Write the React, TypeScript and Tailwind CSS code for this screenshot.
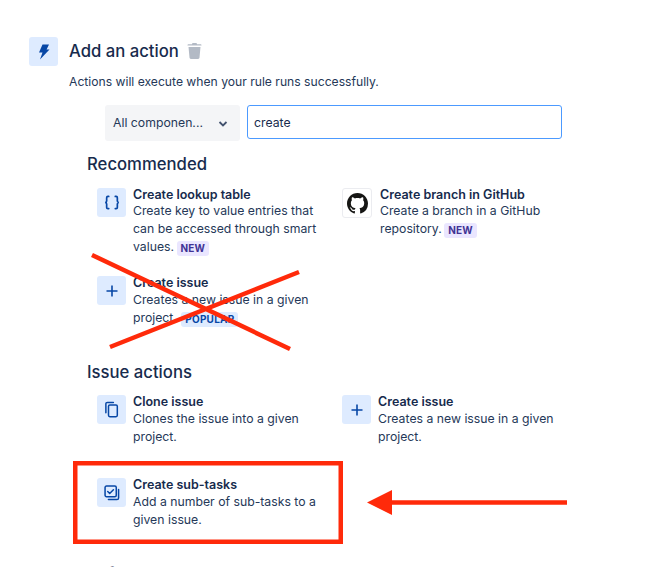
import React from "react";

const Badge = ({ kind, children }: { kind: "new" | "popular"; children: React.ReactNode }) => (
  <span
    className={
      "inline-block h-[15px] rounded-[3px] px-[4px] text-[10px] leading-[15px] font-bold tracking-[0.2px] align-[-1px] " +
      (kind === "new" ? "-ml-px bg-[#eae6ff] text-[#403294]" : "ml-px bg-[#deebff] text-[#0747a6]")
    }
  >
    {children}
  </span>
);

const IconBox = ({ children, plain }: { children: React.ReactNode; plain?: boolean }) => (
  <div
    className={
      "flex shrink-0 items-center justify-center rounded-[3px] " +
      (plain ? "h-[30px] w-[30px] border border-[#ebecf0] bg-white" : "h-[29px] w-[29px] bg-[#deebff]")
    }
  >
    {children}
  </div>
);

const Plus = () => (
  <svg width="14" height="14" viewBox="0 0 14 14" fill="none" stroke="#0747a6" strokeWidth="1.6">
    <path d="M7 1.5v11M1.5 7h11" />
  </svg>
);

const Braces = () => (
  <svg width="18" height="15" viewBox="0 0 18 16" fill="none" stroke="#0747a6" strokeWidth="1.8" strokeLinecap="round">
    <path d="M5.5 1.500H4.6C3.700 1.500 3.300 2 3.300 2.800v3.500c0 .9-.5 1.500-1.500 1.700 1 .2 1.500.8 1.500 1.700v3.500c0 .8.400 1.300 1.300 1.300h.9" />
    <path d="M12.500 1.500h.9c.9 0 1.300.5 1.300 1.300v3.500c0 .9.500 1.500 1.500 1.700-1 .2-1.500.8-1.500 1.700v3.500c0 .8-.4 1.300-1.300 1.300h-.9" />
  </svg>
);

const GitHub = () => (
  <svg width="21" height="21" viewBox="0 0 16 16" fill="#161614">
    <path d="M8 0C3.58 0 0 3.58 0 8c0 3.54 2.29 6.53 5.47 7.59.4.07.55-.17.55-.38 0-.19-.01-.82-.01-1.49-2.01.37-2.53-.49-2.69-.94-.09-.23-.48-.94-.82-1.13-.28-.15-.68-.52-.01-.53.63-.01 1.08.58 1.23.82.72 1.21 1.87.87 2.33.66.07-.52.28-.87.51-1.07-1.78-.2-3.64-.89-3.64-3.95 0-.87.31-1.59.82-2.15-.08-.2-.36-1.02.08-2.12 0 0 .67-.21 2.2.82.64-.18 1.32-.27 2-.27s1.36.09 2 .27c1.53-1.04 2.2-.82 2.2-.82.44 1.1.16 1.92.08 2.12.51.56.82 1.27.82 2.15 0 3.07-1.87 3.75-3.65 3.95.29.25.54.73.54 1.48 0 1.07-.01 1.93-.01 2.2 0 .21.15.46.55.38A8.01 8.01 0 0 0 16 8c0-4.42-3.58-8-8-8z" />
  </svg>
);

const Clone = () => (
  <svg width="15" height="17" viewBox="0 0 16 18" fill="none" stroke="#0747a6" strokeWidth="1.6">
    <path d="M2 12.500V3.200C2 2 2.600 1.400 3.800 1.400H10" strokeLinecap="round" />
    <rect x="4.800" y="4.200" width="9.400" height="12.400" rx="1.400" />
  </svg>
);

const SubTasks = () => (
  <svg width="16" height="16" viewBox="0 0 18 18" fill="none" stroke="#0747a6" strokeWidth="1.7">
    <rect x="1.200" y="1.200" width="12.600" height="12" rx="1.600" />
    <path d="M16.400 5v9.600c0 1-.6 1.800-1.800 1.800H5" strokeLinecap="round" />
    <path d="M4.200 7.400l2.200 2.200 4.200-4.200" strokeLinecap="round" strokeLinejoin="round" />
  </svg>
);

const Bolt = () => (
  <svg width="12" height="16" viewBox="0 0 12 16" fill="#0747a6">
    <path d="M4.500 0.500H11L8.600 5.500H11.500L2 15.500L4.500 8.500H1z" />
  </svg>
);

const Trash = () => (
  <svg width="15" height="16" viewBox="0 0 15 16" fill="#b3bac5">
    <path d="M5.500 0h4l.6 1.200h3.600c.4 0 .8.4.8.8v.6H.5V2c0-.4.4-.8.8-.8h3.600z" />
    <path d="M1.500 4h12l-1 10.600c-.1.800-.6 1.400-1.400 1.400H3.900c-.8 0-1.300-.6-1.400-1.400z" />
  </svg>
);

const Card = ({
  icon,
  title,
  lines,
  tight,
  textClass = "ml-[7px]",
  width = "w-[245px]",
}: {
  icon: React.ReactNode;
  title: string;
  lines: React.ReactNode;
  tight?: boolean;
  textClass?: string;
  width?: string;
}) => (
  <div className={"flex items-start " + width}>
    {icon}
    <div className={"-mt-px " + textClass}>
      <div className="text-[12.5px] leading-[16px] font-semibold text-[#172b4d]">{title}</div>
      <div className={"text-[12.25px] leading-[18px] text-[#253858] " + (tight ? "-mt-px" : "")}>{lines}</div>
    </div>
  </div>
);

export default function App() {
  return (
    <div
      className="relative h-[567px] w-[648px] overflow-hidden bg-white pt-[37px] pl-[29px]"
      style={{ fontFamily: "Inter, 'Liberation Sans', sans-serif" }}
    >
      <div className="flex items-center">
        <IconBox>
          <Bolt />
        </IconBox>
        <h1 className="-mt-[2px] ml-[11px] text-[16.7px] leading-[28px] font-medium text-[#172b4d]">Add an action</h1>
        <div className="-mt-[2px] ml-[8px]">
          <Trash />
        </div>
      </div>

      <p className="mt-[7px] ml-[40px] text-[12.15px] leading-[18px] text-[#253858]">
        Actions will execute when your rule runs successfully.
      </p>

      <div className="mt-[14px] ml-[76px] flex items-start">
        <div className="flex h-[36px] w-[135px] items-center justify-between rounded-[3px] bg-[#f4f5f7] pt-px pr-[12px] pl-[8px] text-[12.25px] text-[#253858]">
          <span>All componen...</span>
          <svg width="10" height="6" viewBox="0 0 10 6" fill="none" stroke="#42526e" strokeWidth="1.8">
            <path d="M1.500 1l3.500 3.500L8.500 1" />
          </svg>
        </div>
        <div className="ml-[7px] flex h-[34px] w-[315px] items-center rounded-[3px] border border-[#4c9aff] bg-white pt-[2px] pl-[6px] text-[12.25px] text-[#172b4d]">
          create
        </div>
      </div>

      <h2 className="mt-[11px] ml-[58px] text-[16.7px] leading-[24px] font-medium text-[#172b4d]">Recommended</h2>

      <div className="mt-[12px] ml-[68px] flex">
        <Card
          tight
          icon={<IconBox><Braces /></IconBox>}
          title="Create lookup table"
          lines={
            <>
              Create key to value entries that
              <br />
              can be accessed through smart
              <br />
              values. <Badge kind="new">NEW</Badge>
            </>
          }
        />
        <Card
          tight
          icon={<IconBox plain><GitHub /></IconBox>}
          title="Create branch in GitHub"
          textClass="ml-[8px]"
          lines={
            <>
              Create a branch in a GitHub
              <br />
              repository. <Badge kind="new">NEW</Badge>
            </>
          }
        />
      </div>

      <div className="mt-[20px] ml-[68px] flex">
        <Card
          icon={<IconBox><Plus /></IconBox>}
          title="Create issue"
          lines={
            <>
              Creates a new issue in a given
              <br />
              project. <Badge kind="popular">POPULAR</Badge>
            </>
          }
        />
      </div>

      <h2 className="mt-[33px] ml-[58px] text-[16.7px] leading-[24px] font-medium text-[#172b4d]">Issue actions</h2>

      <div className="mt-[11px] ml-[68px] flex">
        <Card
          icon={<IconBox><Clone /></IconBox>}
          title="Clone issue"
          lines={
            <>
              Clones the issue into a given
              <br />
              project.
            </>
          }
        />
        <Card
          icon={<IconBox><Plus /></IconBox>}
          title="Create issue"
          lines={
            <>
              Creates a new issue in a given
              <br />
              project.
            </>
          }
        />
      </div>

      <div className="mt-[32px] ml-[68px] flex">
        <Card
          icon={<IconBox><SubTasks /></IconBox>}
          title="Create sub-tasks"
          lines={
            <>
              Add a number of sub-tasks to a
              <br />
              given issue.
            </>
          }
        />
      </div>

      <h2 className="mt-[33px] ml-[58px] text-[16.7px] leading-[24px] font-medium text-[#172b4d]">Software</h2>

      {/* Red annotations drawn over the page */}
      <svg className="absolute top-0 left-0" width="648" height="567" viewBox="0 0 648 567" fill="none">
        <path d="M92 255L290 349M110 347L299 272" stroke="#ff2a0a" strokeWidth="4.5" />
        <rect x="75.250" y="463.250" width="265.500" height="78.500" stroke="#ff2a0a" strokeWidth="4.500" />
        <path d="M392 502.500H567" stroke="#ff2a0a" strokeWidth="4.700" />
        <path d="M367 502.500L392 490V515z" fill="#ff2a0a" />
      </svg>
    </div>
  );
}
